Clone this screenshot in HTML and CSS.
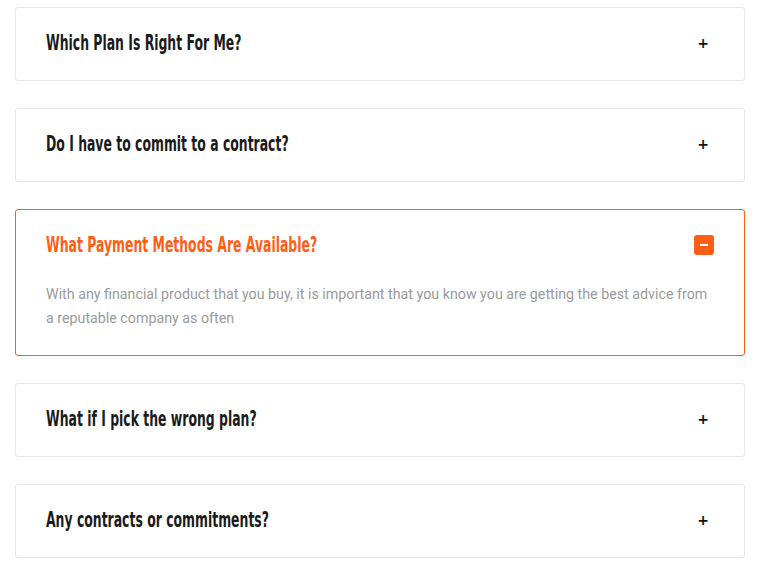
FILE: index.html
```html
<!DOCTYPE html>
<html>
<head>
<meta charset="utf-8">
<link rel="stylesheet" href="styles.css">
</head>
<body>
<div class="faq">
  <div class="item">
    <div class="head"><h3 class="title">Which Plan Is Right For Me?</h3><span class="plus">+</span></div>
  </div>
  <div class="item">
    <div class="head"><h3 class="title">Do I have to commit to a contract?</h3><span class="plus">+</span></div>
  </div>
  <div class="item active">
    <div class="head"><h3 class="title">What Payment Methods Are Available?</h3><span class="minus"><span class="bar"></span></span></div>
    <p class="body">With any financial product that you buy, it is important that you know you are getting the best advice from a reputable company as often</p>
  </div>
  <div class="item">
    <div class="head"><h3 class="title">What if I pick the wrong plan?</h3><span class="plus">+</span></div>
  </div>
  <div class="item">
    <div class="head"><h3 class="title">Any contracts or commitments?</h3><span class="plus">+</span></div>
  </div>
</div>
</body>
</html>
```
FILE: styles.css
```css
html, body { margin: 0; padding: 0; background: #fff; }
.faq {
  padding: 7px 13px 0 15px;
  display: flex;
  flex-direction: column;
  gap: 27px;
}
.item {
  border: 1px solid #e6e6e6;
  border-radius: 3px;
  background: #fff;
}
.item.active { border-color: #ff5e14; }
.head {
  display: flex;
  align-items: center;
  justify-content: space-between;
  padding: 24px 30px 26px;
  height: 22px;
}
.title {
  margin: 0;
  font-family: "DejaVu Sans Condensed", "DejaVu Sans", sans-serif;
  font-weight: 700;
  font-size: 22px;
  line-height: 22px;
  color: #1b1b1b;
  transform: scaleX(0.628);
  transform-origin: left center;
  white-space: nowrap;
}
.active .title { color: #ff5e14; }
.plus {
  font-family: "DejaVu Sans", sans-serif;
  font-weight: 700;
  font-size: 14px;
  color: #111;
  width: 20px;
  margin-right: 1px;
  text-align: center;
  line-height: 20px;
}
.minus {
  width: 20px;
  height: 20px;
  border-radius: 3px;
  background: #ff5e14;
  display: flex;
  align-items: center;
  justify-content: center;
}
.bar { width: 8px; height: 2px; background: #fff; }
.body {
  margin: 0;
  padding: 0 30px 25px;
  font-family: Roboto, sans-serif;
  font-size: 14.25px;
  line-height: 24px;
  color: #9a9a9a;
}
```
